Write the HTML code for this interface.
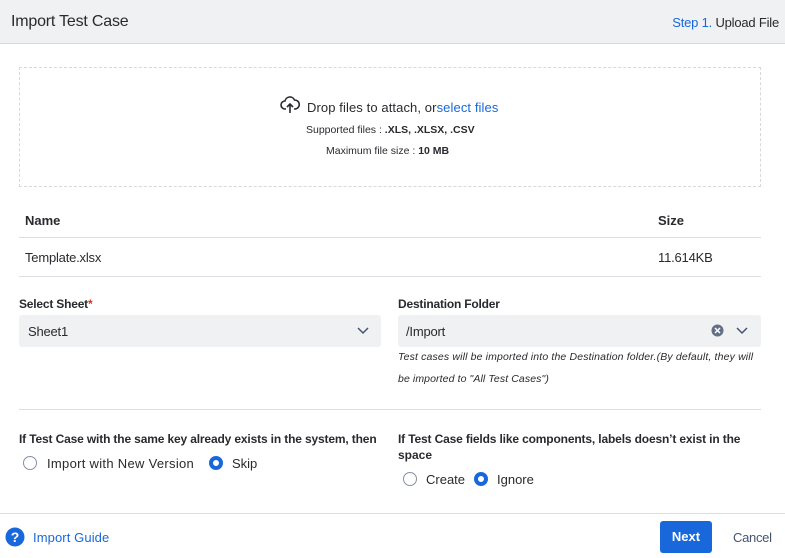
<!DOCTYPE html>
<html><head><style>
*{margin:0;padding:0;box-sizing:border-box}
body{width:785px;height:558px;background:#fff;font-family:"Liberation Sans",sans-serif;color:#292a2e;position:relative;overflow:hidden;font-size:13px}
.a{position:absolute;white-space:nowrap}
.b{font-weight:bold}
.blue{color:#1868db}
.sel{position:absolute;background:#f0f1f3;border-radius:3px;height:32px}
.rad{position:absolute;width:14px;height:14px;border-radius:50%;border:1px solid #8590a2;background:#fff}
.rad.on{border:4px solid #1868db;background:#fff}
</style></head><body>
<div class="a" style="left:0;top:0;width:785px;height:44px;background:#f0f1f3;border-bottom:1px solid #d6d8dc"></div>
<div class="a" style="left:11px;top:13px;font-size:16px;letter-spacing:-0.2px">Import Test Case</div>
<div class="a" style="right:6px;top:15px;font-size:13px;letter-spacing:-0.2px"><span class="blue">Step 1.</span> Upload File</div>

<div class="a" style="left:19px;top:67px;width:742px;height:120px;border:1px dashed #d6d8dc"></div>
<svg class="a" style="left:280px;top:96px" width="20" height="18" viewBox="0 0 20 18"><path d="M6 13H5a4 4 0 0 1 0-8 5 5 0 0 1 9.5-1A4 4 0 0 1 15 13h-1" fill="none" stroke="#292a2e" stroke-width="1.6"/><path d="M10 17V8M7 11l3-3 3 3" fill="none" stroke="#292a2e" stroke-width="1.6"/></svg>
<div class="a" style="left:307px;top:100px;font-size:13px;letter-spacing:0.1px">Drop files to attach, or<span class="blue">select files</span></div>
<div class="a" style="left:306px;top:124px;font-size:10.5px;letter-spacing:0px">Supported files : <span class="b">.XLS, .XLSX, .CSV</span></div>
<div class="a" style="left:326px;top:145px;font-size:10.5px;letter-spacing:0px">Maximum file size : <span class="b">10 MB</span></div>

<div class="a b" style="left:25px;top:213px;font-size:13px">Name</div>
<div class="a b" style="left:658px;top:213px;font-size:13px">Size</div>
<div class="a" style="left:19px;top:237px;width:742px;height:1px;background:#dcdfe4"></div>
<div class="a" style="left:25px;top:250px;font-size:13px;letter-spacing:-0.2px">Template.xlsx</div>
<div class="a" style="left:658px;top:250px;font-size:13px;letter-spacing:-0.2px">11.614KB</div>
<div class="a" style="left:19px;top:276px;width:742px;height:1px;background:#dcdfe4"></div>

<div class="a b" style="left:19px;top:297px;font-size:12px;letter-spacing:-0.2px">Select Sheet<span style="color:#c9372c">*</span></div>
<div class="sel" style="left:19px;top:315px;width:362px"></div>
<div class="a" style="left:28px;top:324px;font-size:13px;letter-spacing:-0.2px">Sheet1</div>
<svg class="a" style="left:357px;top:327px" width="12" height="8"><path d="M1 1l5 5 5-5" fill="none" stroke="#44546f" stroke-width="1.5"/></svg>

<div class="a b" style="left:398px;top:297px;font-size:12px;letter-spacing:-0.2px">Destination Folder</div>
<div class="sel" style="left:398px;top:315px;width:363px"></div>
<div class="a" style="left:406px;top:324px;font-size:13px;letter-spacing:-0.2px">/Import</div>
<svg class="a" style="left:711px;top:324px" width="13" height="13"><circle cx="6.5" cy="6.5" r="6" fill="#626f86"/><path d="M4 4l5 5M9 4l-5 5" stroke="#fff" stroke-width="1.5"/></svg>
<svg class="a" style="left:736px;top:327px" width="12" height="8"><path d="M1 1l5 5 5-5" fill="none" stroke="#44546f" stroke-width="1.5"/></svg>
<div class="a" style="left:398px;top:351px;font-size:10.5px;font-style:italic;letter-spacing:0.15px">Test cases will be imported into the Destination folder.(By default, they will</div>
<div class="a" style="left:398px;top:373px;font-size:10.5px;font-style:italic;letter-spacing:0.1px">be imported to "All Test Cases")</div>

<div class="a" style="left:19px;top:409px;width:742px;height:1px;background:#dcdfe4"></div>

<div class="a b" style="left:19px;top:432px;font-size:12px;letter-spacing:-0.15px">If Test Case with the same key already exists in the system, then</div>
<div class="rad" style="left:23px;top:456px"></div>
<div class="a" style="left:47px;top:456px;font-size:13px;letter-spacing:0.3px">Import with New Version</div>
<div class="rad on" style="left:209px;top:456px"></div>
<div class="a" style="left:232px;top:456px;font-size:13px">Skip</div>

<div class="a b" style="left:398px;top:432px;font-size:12px;letter-spacing:-0.15px">If Test Case fields like components, labels doesn’t exist in the</div>
<div class="a b" style="left:398px;top:448px;font-size:12px">space</div>
<div class="rad" style="left:403px;top:472px"></div>
<div class="a" style="left:426px;top:472px;font-size:13px">Create</div>
<div class="rad on" style="left:474px;top:472px"></div>
<div class="a" style="left:497px;top:472px;font-size:13px">Ignore</div>

<div class="a" style="left:0;top:513px;width:785px;height:1px;background:#dcdfe4"></div>
<svg class="a" style="left:5px;top:527px" width="20" height="20"><circle cx="10" cy="10" r="9.5" fill="#1868db"/><text x="10" y="15" text-anchor="middle" font-family="Liberation Sans" font-weight="bold" font-size="14" fill="#fff">?</text></svg>
<div class="a blue" style="left:33px;top:530px;font-size:13px;letter-spacing:0.1px">Import Guide</div>
<div class="a" style="left:660px;top:521px;width:52px;height:32px;background:#1868db;border-radius:3px;color:#fff;font-weight:bold;font-size:13px;text-align:center;line-height:32px">Next</div>
<div class="a" style="left:733px;top:530px;font-size:13px;color:#44546f;letter-spacing:-0.3px">Cancel</div>
</body></html>
